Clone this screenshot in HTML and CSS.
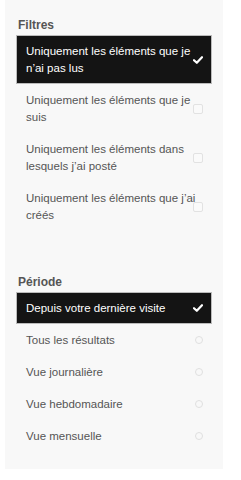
FILE: index.html
```html
<!DOCTYPE html>
<html lang="fr">
<head>
<meta charset="utf-8">
<link rel="stylesheet" href="styles.css">
</head>
<body>
<div class="panel">
  <div class="section">
    <h3 class="title">Filtres</h3>
    <ul class="list">
      <li class="item active"><span class="label">Uniquement les éléments que je n’ai pas lus</span><span class="mark check"><svg viewBox="0 0 10 8" width="10" height="8"><path d="M1 4.2 L3.8 6.8 L9 1.2" fill="none" stroke="#fff" stroke-width="2.2" stroke-linecap="round" stroke-linejoin="round"/></svg></span></li>
      <li class="item"><span class="label">Uniquement les éléments que je suis</span><span class="mark box"></span></li>
      <li class="item"><span class="label">Uniquement les éléments dans lesquels j’ai posté</span><span class="mark box"></span></li>
      <li class="item"><span class="label">Uniquement les éléments que j’ai créés</span><span class="mark box"></span></li>
    </ul>
  </div>
  <div class="section">
    <h3 class="title">Période</h3>
    <ul class="list">
      <li class="item active"><span class="label">Depuis votre dernière visite</span><span class="mark check"><svg viewBox="0 0 10 8" width="10" height="8"><path d="M1 4.2 L3.8 6.8 L9 1.2" fill="none" stroke="#fff" stroke-width="2.2" stroke-linecap="round" stroke-linejoin="round"/></svg></span></li>
      <li class="item"><span class="label">Tous les résultats</span><span class="mark radio"></span></li>
      <li class="item"><span class="label">Vue journalière</span><span class="mark radio"></span></li>
      <li class="item"><span class="label">Vue hebdomadaire</span><span class="mark radio"></span></li>
      <li class="item"><span class="label">Vue mensuelle</span><span class="mark radio"></span></li>
    </ul>
  </div>
</div>
</body>
</html>
```
FILE: styles.css
```css
html, body {
  margin: 0;
  padding: 0;
  background: #fff;
}
body {
  font-family: "Helvetica Neue", "Liberation Sans", Arial, sans-serif;
  font-size: 11.5px;
  color: #555;
}
.panel {
  width: 218px;
  margin-left: 5px;
  background: #f8f8f8;
  padding: 17px 12px 16px 12px;
  box-sizing: border-box;
}
.section + .section {
  margin-top: 44px;
}
.title {
  margin: 0 0 3px 1px;
  font-size: 12px;
  font-weight: bold;
  color: #555;
  line-height: 16px;
}
.list {
  list-style: none;
  margin: 0;
  padding: 0;
}
.item {
  display: flex;
  align-items: center;
  padding: 6.5px 8px 6.5px 9px;
  margin-bottom: 2px;
  line-height: 17px;
}
.item.active {
  background: #141414;
  color: #fff;
  box-shadow: 0 0 0 1px #bbb;
}
.label {
  flex: 1;
  margin-right: -6px;
}
.mark {
  flex: none;
  width: 10px;
  display: flex;
  justify-content: center;
  align-items: center;
}
.check svg {
  display: block;
}
.box {
  width: 8px;
  height: 8px;
  border: 1px solid #e2e2e2;
  border-radius: 2px;
  background: #fafafa;
}
.radio {
  width: 6px;
  height: 6px;
  border: 1.5px solid #e0e0e0;
  border-radius: 50%;
}
```
